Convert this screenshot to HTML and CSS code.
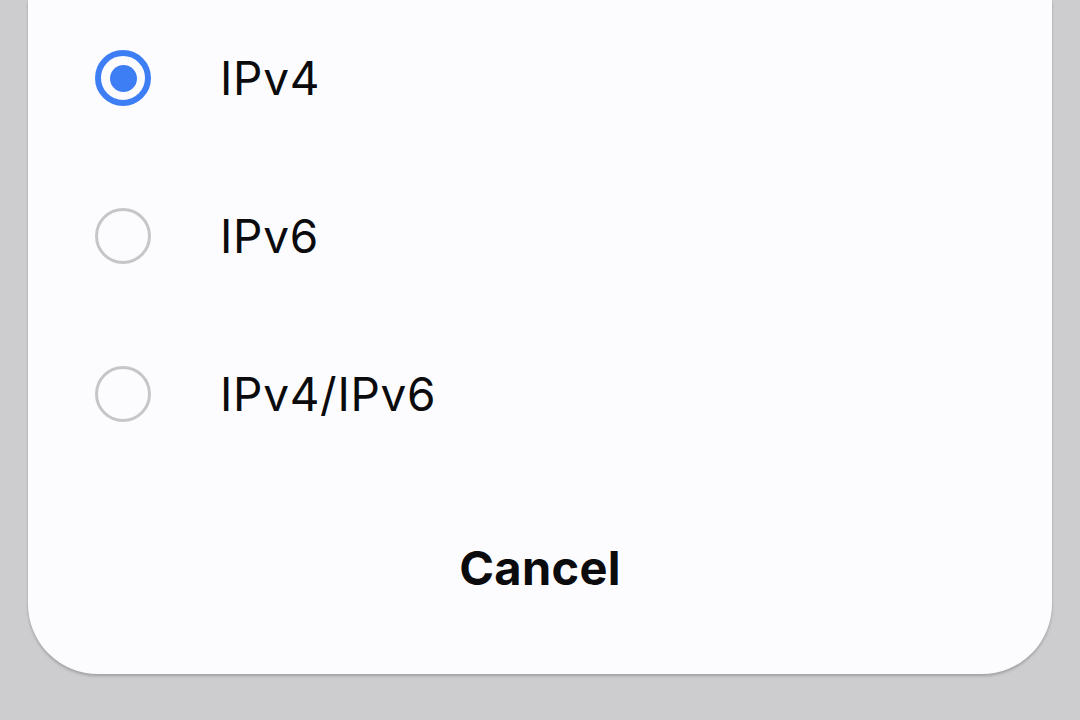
FILE: index.html
```html
<!DOCTYPE html>
<html lang="en">
<head>
<meta charset="utf-8">
<title>IP protocol</title>
<link rel="stylesheet" href="styles.css">
</head>
<body>
<div class="sheet">
  <ul class="options">
    <li class="option">
      <span class="radio radio-on"><span class="dot"></span></span>
      <span class="label">IPv4</span>
    </li>
    <li class="option">
      <span class="radio"></span>
      <span class="label">IPv6</span>
    </li>
    <li class="option">
      <span class="radio"></span>
      <span class="label">IPv4/IPv6</span>
    </li>
  </ul>
  <div class="actions">
    <button class="cancel">Cancel</button>
  </div>
</div>
</body>
</html>
```
FILE: styles.css
```css
html, body {
  margin: 0;
  padding: 0;
  height: 100%;
}
body {
  background: #cdcdcf;
  font-family: "Inter", "Noto Sans", sans-serif;
  color: #0b0b0d;
  overflow: hidden;
}
.sheet {
  margin: 0 28px;
  height: 674px;
  background: #fcfcfe;
  border-radius: 0 0 70px 70px;
  box-shadow: 0 2px 3px rgba(0, 0, 0, 0.22);
  display: flex;
  flex-direction: column;
}
.options {
  list-style: none;
  margin: -1px 0 0 0;
  padding: 0;
}
.option {
  height: 158px;
  display: flex;
  align-items: center;
  padding-left: 67px;
}
.radio {
  box-sizing: border-box;
  width: 56px;
  height: 56px;
  border-radius: 50%;
  border: 3.5px solid #c6c6c8;
  display: flex;
  align-items: center;
  justify-content: center;
  flex: none;
}
.radio-on {
  border: 6px solid #3e7ef5;
}
.dot {
  width: 27px;
  height: 27px;
  border-radius: 50%;
  background: #3e7ef5;
}
.label {
  margin-left: 69px;
  font-size: 46px;
  line-height: 1;
  letter-spacing: 0.7px;
}
.actions {
  display: flex;
  justify-content: center;
  margin-top: 71px;
}
.cancel {
  border: none;
  background: transparent;
  font-family: inherit;
  font-size: 47px;
  font-weight: 700;
  color: #0b0b0d;
  padding: 0;
  line-height: 1;
  letter-spacing: 0.3px;
}
```
